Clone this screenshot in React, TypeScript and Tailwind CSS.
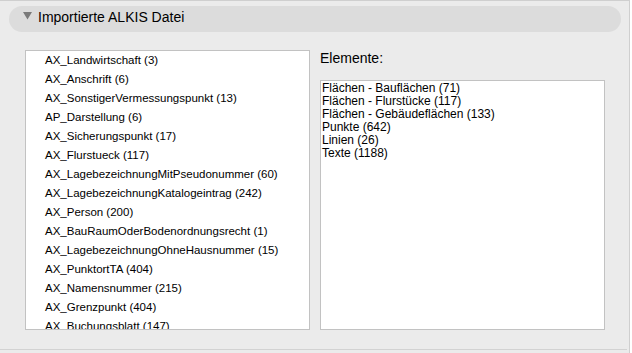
const leftItems = [
  "AX_Landwirtschaft (3)",
  "AX_Anschrift (6)",
  "AX_SonstigerVermessungspunkt (13)",
  "AP_Darstellung (6)",
  "AX_Sicherungspunkt (17)",
  "AX_Flurstueck (117)",
  "AX_LagebezeichnungMitPseudonummer (60)",
  "AX_LagebezeichnungKatalogeintrag (242)",
  "AX_Person (200)",
  "AX_BauRaumOderBodenordnungsrecht (1)",
  "AX_LagebezeichnungOhneHausnummer (15)",
  "AX_PunktortTA (404)",
  "AX_Namensnummer (215)",
  "AX_Grenzpunkt (404)",
  "AX_Buchungsblatt (147)",
]

const elements = [
  "Flächen - Bauflächen (71)",
  "Flächen - Flurstücke (117)",
  "Flächen - Gebäudeflächen (133)",
  "Punkte (642)",
  "Linien (26)",
  "Texte (1188)",
]

export default function App() {
  return (
    <div className="flex h-[353px] w-[632px] bg-white font-['Liberation_Sans',Arial,sans-serif] text-black">
      <div className="flex h-full w-[630px] flex-col border-r border-t border-[#cfcfcf] bg-[#ebebeb]">
        {/* Section header */}
        <div className="ml-[9px] mt-[5px] flex h-[26px] w-[612px] items-center rounded-full bg-[#dcdcdc] pb-[4px] pl-[14px]">
          <svg width="9" height="8" viewBox="0 0 9 8" className="mr-[6px] mt-[-3px]">
            <path d="M0 0 H9 L4.5 7.5 Z" fill="#7a7a7a" />
          </svg>
          <span className="text-[14px] leading-none">Importierte ALKIS Datei</span>
        </div>

        <div className="ml-[25px] mt-[18px] flex gap-[10px]">
          {/* Left list */}
          <div className="h-[280px] w-[285px] overflow-hidden border border-[#c2c2c2] bg-white">
            {leftItems.map((item) => (
              <div key={item} className="flex h-[19px] items-center pl-[19px] text-[11.5px] leading-none">
                {item}
              </div>
            ))}
          </div>

          {/* Right column */}
          <div className="flex flex-col">
            <div className="mt-[1px] h-[29px] text-[14px] leading-[14px]">Elemente:</div>
            <div className="h-[250px] w-[285px] border border-[#c2c2c2] bg-white pt-[1px] pl-[1px]">
              {elements.map((item) => (
                <div key={item} className="h-[13px] text-[12px] leading-[13px]">
                  {item}
                </div>
              ))}
            </div>
          </div>
        </div>

        <div className="mt-auto mb-[3px] h-px w-[627px] bg-[#d2d2d2]" />
      </div>
    </div>
  )
}
